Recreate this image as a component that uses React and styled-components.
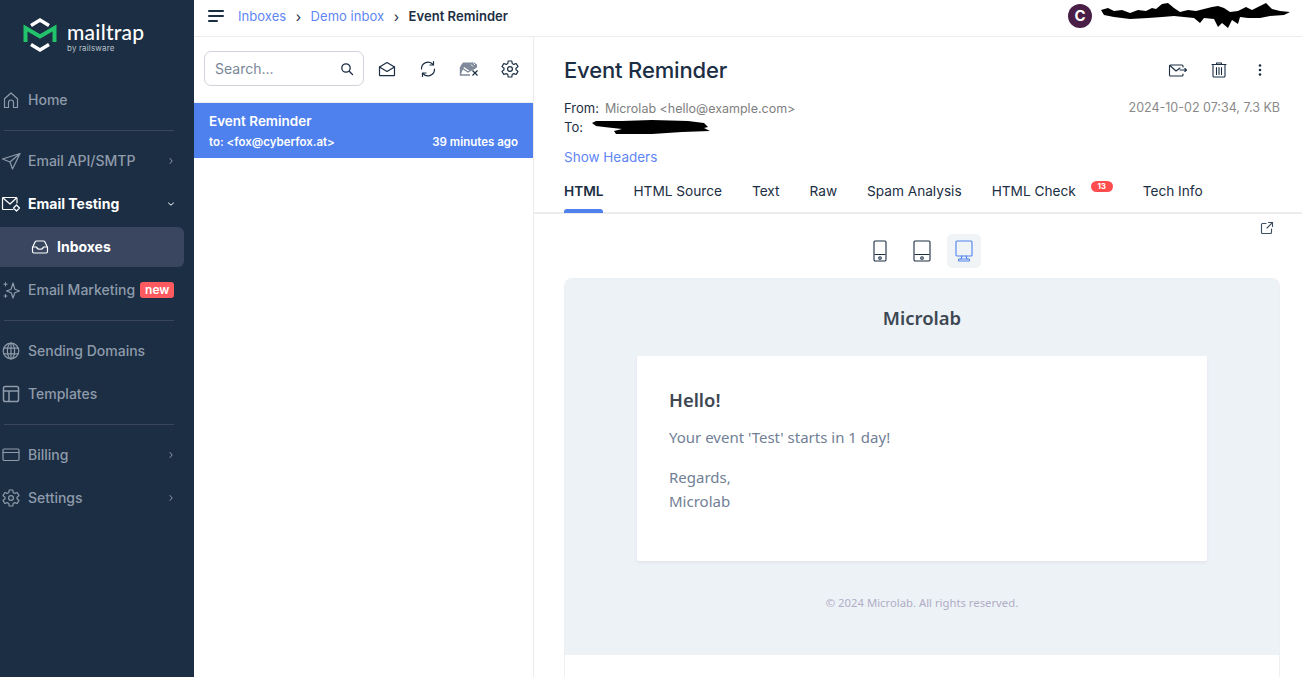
import React from 'react'
import styled, { createGlobalStyle } from 'styled-components'

const GlobalStyle = createGlobalStyle`
    html, body {
        margin: 0;
        padding: 0;
        height: 100%;
        overflow: hidden;
        background: #fff;
        font-family: Inter, "Liberation Sans", sans-serif;
    }
    #root { height: 100%; }
    * { box-sizing: border-box; }
`

const Svg = ({ size = 18, w, h, children, ...rest }) => (
    <svg width={w || size} height={h || size} viewBox={`0 0 ${w || size} ${h || size}`} fill="none" stroke="currentColor" strokeWidth="1.2" strokeLinecap="round" strokeLinejoin="round" {...rest}>
        {children}
    </svg>
)

const Logo = () => (
    <svg width="34" height="36" viewBox="0 0 34 36" fill="none">
        <path d="M8 8.5 L17 3 L26 8.5" stroke="#fff" strokeWidth="3.4" strokeLinejoin="miter" />
        <path d="M8 27.5 L17 33 L26 27.5" stroke="#fff" strokeWidth="3.4" strokeLinejoin="miter" />
        <path d="M2.5 25 V11 L17 19.5 L31.5 11 V25" stroke="#22c36b" strokeWidth="4" strokeLinejoin="miter" />
    </svg>
)

const HomeIcon = () => <Svg><path d="M2.5 16.5 V7.8 L9 2 L15.5 7.8 V16.5 H11.5 V11.5 a2.5 2.5 0 0 0 -5 0 V16.5 Z" /></Svg>
const SendIcon = () => <Svg w={20} h={18}><path d="M1.5 7 L19 1.5 L11.5 17 L9 10 Z M9 10 L19 1.5" /></Svg>
const TestingIcon = () => <Svg w={20} h={18}><path d="M12 14.5 H2.5 a1 1 0 0 1 -1 -1 V3.5 a1 1 0 0 1 1 -1 H15 a1 1 0 0 1 1 1 V8" /><path d="M2 3 L9 9 L15.5 3" /><path d="M15.5 10 L18.5 13 L15.5 16 L12.5 13 Z" /></Svg>
const InboxIcon = () => <Svg><path d="M1.5 9.5 L4.2 3.8 a1.5 1.5 0 0 1 1.3 -.8 H12.5 a1.5 1.5 0 0 1 1.3 .8 L16.5 9.5 V13.5 a1.5 1.5 0 0 1 -1.5 1.5 H3 a1.5 1.5 0 0 1 -1.5 -1.5 Z" /><path d="M1.5 9 H5.5 C6.5 12 11.5 12 12.5 9 H16.5" /></Svg>
const SparkIcon = () => <Svg><path d="M11 2 L12.8 8.2 L17.5 10 L12.8 11.8 L11 17 L9.2 11.8 L4.5 10 L9.2 8.2 Z" /><path d="M3.5 1.5 V5 M1.8 3.2 H5.2 M3.5 13.5 V16.5 M2 15 H5" strokeWidth="1" /></Svg>
const GlobeIcon = () => <Svg><circle cx="9" cy="9" r="7.8" /><ellipse cx="9" cy="9" rx="3.6" ry="7.8" /><path d="M9 1.2 V16.8 M1.8 6.2 H16.2 M1.8 11.8 H16.2" /></Svg>
const TemplateIcon = () => <Svg><rect x="1.5" y="1.5" width="15" height="15" rx="1.8" strokeWidth="1.5" /><path d="M1.5 6 H16.5 M7 6 V16.5" strokeWidth="1.5" /></Svg>
const CardIcon = () => <Svg><rect x="1" y="3" width="16" height="11.5" rx="1.2" /><path d="M1 6.5 H17" /></Svg>
const GearIcon = ({ size = 18 }) => (
    <svg width={size} height={size} viewBox="0 0 18 18" fill="none" stroke="currentColor" strokeWidth="1.2" strokeLinejoin="round">
        <path d="M7.2 1 H10.8 L11.2 3.5 L12.8 4.4 L15.2 3.5 L17 6.6 L15 8.2 V9.8 L17 11.4 L15.2 14.5 L12.8 13.6 L11.2 14.5 L10.8 17 H7.2 L6.8 14.5 L5.2 13.6 L2.8 14.5 L1 11.4 L3 9.8 V8.2 L1 6.6 L2.8 3.5 L5.2 4.4 L6.8 3.5 Z" />
        <circle cx="9" cy="9" r="2.4" />
    </svg>
)
const Chevron = ({ open }) => (
    <svg width="8" height="8" viewBox="0 0 8 8" fill="none" stroke="currentColor" strokeWidth="1" strokeLinecap="round" strokeLinejoin="round">
        {open ? <path d="M1.5 3 L4 5.2 L6.5 3" /> : <path d="M3 1.5 L5.2 4 L3 6.5" />}
    </svg>
)

const items = [
    { label: 'Home', icon: <HomeIcon /> },
    { divider: true },
    { label: 'Email API/SMTP', icon: <SendIcon />, chevron: true },
    { label: 'Email Testing', icon: <TestingIcon />, chevron: true, open: true, active: true },
    { label: 'Inboxes', icon: <InboxIcon />, sub: true },
    { label: 'Email Marketing', icon: <SparkIcon />, badge: 'new' },
    { divider: true },
    { label: 'Sending Domains', icon: <GlobeIcon /> },
    { label: 'Templates', icon: <TemplateIcon /> },
    { divider: true },
    { label: 'Billing', icon: <CardIcon />, chevron: true },
    { label: 'Settings', icon: <GearIcon />, chevron: true },
]

const tabs = ['HTML', 'HTML Source', 'Text', 'Raw', 'Spam Analysis', 'HTML Check', 'Tech Info']

const App = () => (
    <Page>
        <GlobalStyle />
        <Sidebar>
            <Brand>
                <Logo />
                <BrandText>
                    <BrandName>mailtrap</BrandName>
                    <BrandSub>by railsware</BrandSub>
                </BrandText>
            </Brand>
            <Nav>
                {items.map((item, i) => {
                    if (item.divider) return <NavDivider key={i} />
                    if (item.sub) {
                        return (
                            <SubItem key={i}>
                                {item.icon}
                                {item.label}
                            </SubItem>
                        )
                    }
                    return (
                        <NavItem key={i} $active={item.active}>
                            <NavIcon>{item.icon}</NavIcon>
                            <NavLabel>{item.label}</NavLabel>
                            {item.badge && <NewBadge>{item.badge}</NewBadge>}
                            {item.chevron && <NavChevron><Chevron open={item.open} /></NavChevron>}
                        </NavItem>
                    )
                })}
            </Nav>
        </Sidebar>

        <Main>
            <TopBar>
                <Burger>
                    <svg width="16" height="12" viewBox="0 0 16 12" fill="#1b2e43">
                        <rect x="0" y="0" width="16" height="2" rx="1" />
                        <rect x="0" y="5" width="16" height="2" rx="1" />
                        <rect x="0" y="10" width="10" height="2" rx="1" />
                    </svg>
                </Burger>
                <Crumbs>
                    <Crumb>Inboxes</Crumb>
                    <CrumbSep>›</CrumbSep>
                    <Crumb>Demo inbox</Crumb>
                    <CrumbSep>›</CrumbSep>
                    <CrumbCurrent>Event Reminder</CrumbCurrent>
                </Crumbs>
                <Account>
                    <Avatar>C</Avatar>
                    <svg width="192" height="28" viewBox="0 0 192 28">
                        <path d="M1 8 L8 6 L14 9 L22 8 L30 11 L38 8 L46 9 L52 6 L56 7 L62 2 L68 1 L74 6 L80 10 L88 8 L96 9 L104 7 L112 5 L118 4 L124 6 L130 10 L138 9 L146 5 L152 8 L160 4 L166 1 L172 7 L180 9 L190 10 L184 13 L170 14 L160 16 L148 16 L140 15 L138 22 L132 18 L128 26 L122 21 L118 25 L114 17 L104 16 L100 21 L94 16 L84 15 L74 14 L62 15 L48 16 L30 17 L14 15 L4 13 Z" fill="#000" />
                    </svg>
                </Account>
            </TopBar>
            <Content>
                <ListPane>
                    <ListTools>
                        <SearchBox>
                            <SearchText>Search...</SearchText>
                            <Svg size={14} strokeWidth="1.3"><circle cx="6" cy="6" r="4.2" /><path d="M9.2 9.2 L12.5 12.5" /></Svg>
                        </SearchBox>
                        <ToolButton>
                            <Svg>
                                <path d="M1.5 7 L9 2.5 L16.5 7 V15 a.7 .7 0 0 1 -.7 .7 H2.2 a.7 .7 0 0 1 -.7 -.7 Z" />
                                <path d="M1.5 7 L9 11.5 L16.5 7" />
                            </Svg>
                        </ToolButton>
                        <ToolButton>
                            <Svg>
                                <path d="M2.5 9 A6.5 6.5 0 0 1 14 4.5" />
                                <path d="M15.5 9 A6.5 6.5 0 0 1 4 13.5" />
                                <path d="M14.5 1.5 V5 H11 M3.5 16.5 V13 H7" />
                            </Svg>
                        </ToolButton>
                        <ToolButton>
                            <svg width="20" height="18" viewBox="0 0 20 18" fill="none">
                                <path d="M1.5 15 V6 L4 2.5 H15 L18 4.5 V7.5 L11 11 L5 7 Z" fill="#7e8a99" />
                                <path d="M12 4.5 L14 6.5 M14.5 3.5 L16 5" stroke="#fff" strokeWidth="1" />
                                <path d="M1.5 7 L9 12 L16 8 M1.5 7 V15 H11" stroke="#7e8a99" strokeWidth="1.4" />
                                <path d="M13.5 10.5 L18.5 15.5 M18.5 10.5 L13.5 15.5" stroke="#1b2e43" strokeWidth="1.2" />
                            </svg>
                        </ToolButton>
                        <ToolButton><GearIcon /></ToolButton>
                    </ListTools>
                    <MessageRow>
                        <MessageTitle>Event Reminder</MessageTitle>
                        <MessageMeta>
                            <span>to: &lt;fox@cyberfox.at&gt;</span>
                            <span>39 minutes ago</span>
                        </MessageMeta>
                    </MessageRow>
                </ListPane>

                <MessagePane>
                    <MessageHead>
                        <TitleRow>
                            <Subject>Event Reminder</Subject>
                            <Actions>
                                <Svg w={20} h={16} strokeWidth="1.1">
                                    <path d="M15 12 V13 a1 1 0 0 1 -1 1 H2.5 a1 1 0 0 1 -1 -1 V4 a1 1 0 0 1 1 -1 H14 a1 1 0 0 1 1 1 V5" />
                                    <path d="M2 3.5 L8 9 L12 6" />
                                    <path d="M12 8 H18.5 M16.8 6.5 L18.5 8 L16.8 9.5" />
                                </Svg>
                                <Svg size={16} strokeWidth="1.1">
                                    <path d="M1 2.5 H15 M5.5 2.5 V1 H10.5 V2.5" />
                                    <path d="M2 2.5 V14 a1 1 0 0 0 1 1 H13 a1 1 0 0 0 1 -1 V2.5" />
                                    <path d="M5.5 5.5 V12.5 M8 5.5 V12.5 M10.5 5.5 V12.5" />
                                </Svg>
                                <MoreDots>
                                    <svg width="4" height="14" viewBox="0 0 4 14" fill="#1b2e43">
                                        <circle cx="2" cy="2.5" r="1.3" />
                                        <circle cx="2" cy="7" r="1.3" />
                                        <circle cx="2" cy="11.5" r="1.3" />
                                    </svg>
                                </MoreDots>
                            </Actions>
                        </TitleRow>
                        <FromRow>
                            <div>
                                <FieldLabel>From:</FieldLabel>
                                <FieldValue>Microlab &lt;hello@example.com&gt;</FieldValue>
                            </div>
                            <Stamp>2024-10-02 07:34, 7.3 KB</Stamp>
                        </FromRow>
                        <ToRow>
                            <FieldLabel>To:</FieldLabel>
                            <svg width="120" height="16" viewBox="0 0 120 16">
                                <path d="M0 4 L4 2 L30 2 L60 1 L96 2 L112 4 L116 8 L112 9 L118 12 L90 13 L60 15 L24 15 L22 12 L30 10 L12 8 L4 7 Z" fill="#000" />
                            </svg>
                        </ToRow>
                        <HeadersLink>Show Headers</HeadersLink>
                    </MessageHead>
                    <Tabs>
                        {tabs.map((t, i) => (
                            <Tab key={t} $active={i === 0} $badged={t === 'HTML Check'}>
                                {t}
                                {t === 'HTML Check' && <CountBadge>13</CountBadge>}
                            </Tab>
                        ))}
                    </Tabs>
                    <Preview>
                        <ExternalLink>
                            <Svg size={14} strokeWidth="1.1">
                                <path d="M6 2.5 H2.5 a1 1 0 0 0 -1 1 V11.5 a1 1 0 0 0 1 1 H10.5 a1 1 0 0 0 1 -1 V8" />
                                <path d="M7 7 L12.5 1.5 M8.5 1.5 H12.5 V5.5" />
                            </Svg>
                        </ExternalLink>
                        <Devices>
                            <DeviceButton>
                                <Svg w={14} h={22} strokeWidth="1.1">
                                    <rect x="1" y="1" width="12" height="20" rx="1.2" />
                                    <path d="M2 14.5 H12" />
                                    <circle cx="7" cy="18" r="1.3" />
                                </Svg>
                            </DeviceButton>
                            <DeviceButton>
                                <Svg w={18} h={22} strokeWidth="1.1">
                                    <rect x="1" y="1" width="16" height="20" rx="1.2" />
                                    <path d="M2 14.5 H16" />
                                    <circle cx="9" cy="18" r="1.3" />
                                </Svg>
                            </DeviceButton>
                            <DeviceButton $active>
                                <Svg w={18} h={22} strokeWidth="1.1">
                                    <rect x="1" y="1" width="16" height="15" rx="1" />
                                    <path d="M7 16 L6 19 M11 16 L12 19" />
                                    <rect x="3.5" y="19" width="11" height="2" rx=".8" />
                                </Svg>
                            </DeviceButton>
                        </Devices>
                        <EmailFrame>
                            <EmailBody>
                                <EmailBrand>Microlab</EmailBrand>
                                <EmailCard>
                                    <EmailHello>Hello!</EmailHello>
                                    <EmailText>Your event 'Test' starts in 1 day!</EmailText>
                                    <EmailText>Regards,<br />Microlab</EmailText>
                                </EmailCard>
                                <EmailFooter>© 2024 Microlab. All rights reserved.</EmailFooter>
                            </EmailBody>
                        </EmailFrame>
                    </Preview>
                </MessagePane>
            </Content>
        </Main>
    </Page>
)

export default App

const Page = styled.div`
    display: flex;
    width: 1302px;
    height: 677px;
    overflow: hidden;
`

const Sidebar = styled.aside`
    width: 194px;
    flex: none;
    background: #1b2e43;
    color: #8f9bab;
`

const Brand = styled.div`
    display: flex;
    align-items: center;
    gap: 10px;
    height: 78px;
    padding: 0 0 9px 23px;
`

const BrandText = styled.div`
    display: flex;
    flex-direction: column;
    gap: 2px;
    padding-top: 4px;
    color: #fff;
`

const BrandName = styled.div`
    font-family: Lato, sans-serif;
    font-size: 21px;
    font-weight: 500;
    line-height: 21px;
    letter-spacing: .25px;
`

const BrandSub = styled.div`
    font-size: 8px;
    line-height: 9px;
    letter-spacing: .15px;
    color: #b9c1cc;
`

const Nav = styled.nav`
    display: flex;
    flex-direction: column;
`

const NavItem = styled.div`
    display: flex;
    align-items: center;
    height: 43px;
    padding: 0 19px 0 1px;
    font-size: 14px;
    font-weight: ${p => (p.$active ? 700 : 500)};
    color: ${p => (p.$active ? '#fff' : '#8f9bab')};
`

const NavIcon = styled.span`
    display: flex;
    justify-content: center;
    width: 20px;
    margin-right: 7px;
`

const NavLabel = styled.span`
    white-space: nowrap;
`

const NavChevron = styled.span`
    display: flex;
    margin-left: auto;
`

const NewBadge = styled.span`
    margin-left: 5px;
    padding: 0 5px;
    height: 16px;
    line-height: 15px;
    border-radius: 3px;
    background: #ff5a5f;
    color: #fff;
    font-size: 12px;
    font-weight: 600;
`

const NavDivider = styled.div`
    height: 1px;
    margin: 9px 20px 8px 4px;
    background: #3a4560;
`

const SubItem = styled.div`
    display: flex;
    align-items: center;
    gap: 8px;
    width: 184px;
    height: 40px;
    margin: 2px 0 1px;
    padding: 0 0 1px 31px;
    background: #3a4560;
    border-radius: 0 6px 6px 0;
    color: #fff;
    font-size: 14px;
    font-weight: 700;
`

const Main = styled.div`
    flex: 1;
    min-width: 0;
    display: flex;
    flex-direction: column;
`

const TopBar = styled.header`
    display: flex;
    align-items: center;
    height: 37px;
    flex: none;
    padding: 0 10px 4px 14px;
    border-bottom: 1px solid #ececec;
`

const Burger = styled.div`
    display: flex;
    margin-right: 14px;
`

const Crumbs = styled.div`
    display: flex;
    align-items: center;
    font-size: 13px;
    letter-spacing: .04px;
`

const Crumb = styled.span`
    color: #5f86f5;
`

const CrumbSep = styled.span`
    margin: 0 9.5px;
    color: #1b2e43;
    font-size: 14px;
    line-height: 13px;
`

const CrumbCurrent = styled.span`
    color: #1b2e43;
    font-weight: 600;
`

const Account = styled.div`
    display: flex;
    align-items: center;
    gap: 8px;
    margin-left: auto;
`

const Avatar = styled.div`
    width: 24px;
    height: 24px;
    border-radius: 50%;
    background: #4a1f47;
    color: #fff;
    font-size: 15px;
    font-weight: 700;
    line-height: 24px;
    text-align: center;
`

const Content = styled.div`
    flex: 1;
    min-height: 0;
    display: flex;
`

const ListPane = styled.section`
    width: 340px;
    flex: none;
    border-right: 1px solid #ececec;
`

const ListTools = styled.div`
    display: flex;
    align-items: center;
    height: 66px;
    padding: 0 0 2px 10px;
    border-bottom: 1px solid #ececec;
`

const SearchBox = styled.div`
    display: flex;
    flex: none;
    align-items: center;
    justify-content: space-between;
    width: 160px;
    height: 35px;
    margin-right: 2px;
    padding: 0 9px 0 10px;
    border: 1px solid #cfd3dc;
    border-radius: 7px;
    color: #1b2e43;
`

const SearchText = styled.span`
    font-size: 14px;
    color: #7a8798;
`

const ToolButton = styled.div`
    display: flex;
    flex: none;
    align-items: center;
    justify-content: center;
    width: 41px;
    color: #1b2e43;
`

const MessageRow = styled.div`
    height: 55px;
    padding: 9px 15px 0;
    background: #4e81ee;
    color: #fff;
`

const MessageTitle = styled.div`
    font-size: 13.5px;
    font-weight: 600;
    line-height: 18px;
`

const MessageMeta = styled.div`
    display: flex;
    justify-content: space-between;
    margin-top: 5px;
    font-size: 11.5px;
    font-weight: 600;
    line-height: 15px;
`

const MessagePane = styled.section`
    flex: 1;
    min-width: 0;
    display: flex;
    flex-direction: column;
`

const MessageHead = styled.div`
    padding: 0 22px 0 30px;
`

const TitleRow = styled.div`
    display: flex;
    align-items: center;
    justify-content: space-between;
    height: 61px;
    padding-top: 4px;
`

const Subject = styled.h1`
    margin: 0;
    font-size: 22px;
    font-weight: 500;
    letter-spacing: -.15px;
    color: #1b2e43;
`

const Actions = styled.div`
    display: flex;
    align-items: center;
    gap: 23px;
    margin-right: 18px;
    color: #1b2e43;
`

const MoreDots = styled.span`
    display: flex;
    margin-left: 8px;
`

const FromRow = styled.div`
    display: flex;
    align-items: center;
    justify-content: space-between;
    height: 18px;
    margin-bottom: 1px;
`

const ToRow = styled.div`
    display: flex;
    align-items: center;
    gap: 9px;
    height: 19px;
`

const FieldLabel = styled.span`
    font-size: 13px;
    color: #1b2e43;
`

const FieldValue = styled.span`
    margin-left: 6px;
    font-size: 12.5px;
    color: #7f7f7f;
`

const Stamp = styled.span`
    font-size: 12.5px;
    color: #8a8a8a;
`

const HeadersLink = styled.div`
    margin-top: 13px;
    font-size: 13.5px;
    line-height: 16px;
    color: #5f86f5;
`

const Tabs = styled.div`
    display: flex;
    gap: 30px;
    height: 49px;
    flex: none;
    padding: 0 30px;
    border-bottom: 2px solid #ececec;
`

const Tab = styled.div`
    position: relative;
    display: flex;
    align-items: flex-start;
    padding-top: 18px;
    font-size: 13.65px;
    font-weight: ${p => (p.$active ? 600 : 400)};
    color: #1b2e43;
    margin-right: ${p => (p.$badged ? '37px' : 0)};

    ${p => p.$active && `
        &::after {
            content: '';
            position: absolute;
            left: 0;
            right: 0;
            bottom: -1px;
            height: 4px;
            background: #4e81ee;
            border-radius: 3px 3px 0 0;
        }
    `}
`

const CountBadge = styled.span`
    position: absolute;
    top: 16px;
    right: -37px;
    width: 22px;
    height: 11px;
    border-radius: 6px;
    background: #ff4d4f;
    color: #fff;
    font-size: 8px;
    font-weight: 700;
    line-height: 11px;
    text-align: center;
`

const Preview = styled.div`
    position: relative;
    flex: 1;
    min-height: 0;
    padding: 0 22px 0 30px;
    overflow: hidden;
`

const ExternalLink = styled.div`
    position: absolute;
    top: 7px;
    right: 28px;
    display: flex;
    color: #3d4d60;
`

const Devices = styled.div`
    display: flex;
    justify-content: center;
    gap: 8px;
    padding: 20px 0 10px;
`

const DeviceButton = styled.div`
    display: flex;
    align-items: center;
    justify-content: center;
    width: 34px;
    height: 34px;
    border-radius: 5px;
    background: ${p => (p.$active ? '#f0f4f6' : 'transparent')};
    color: ${p => (p.$active ? '#4e81ee' : '#1b2e43')};
`

const EmailFrame = styled.div`
    height: 430px;
    border: 1px solid #edf0f3;
    border-bottom: none;
    border-radius: 8px 8px 0 0;
    overflow: hidden;
    font-family: "Noto Sans", "Open Sans", sans-serif;
`

const EmailBody = styled.div`
    height: 376px;
    padding-top: 24px;
    background: #edf2f7;
`

const EmailBrand = styled.div`
    height: 53px;
    font-size: 18.5px;
    font-weight: 600;
    line-height: 30px;
    text-align: center;
    color: #3d4852;
`

const EmailCard = styled.div`
    width: 570px;
    height: 205px;
    margin: 0 auto;
    padding: 31px 32px;
    background: #fff;
    border-radius: 2px;
    box-shadow: 0 2px 3px #e2e6eb;
`

const EmailHello = styled.div`
    margin-bottom: 12px;
    font-size: 18.4px;
    font-weight: 600;
    line-height: 26px;
    color: #3d4852;
`

const EmailText = styled.p`
    margin: 0 0 16px;
    font-size: 15px;
    line-height: 24px;
    color: #718096;
`

const EmailFooter = styled.div`
    margin-top: 33px;
    font-size: 11.3px;
    line-height: 18px;
    text-align: center;
    color: #b0adc5;
`
